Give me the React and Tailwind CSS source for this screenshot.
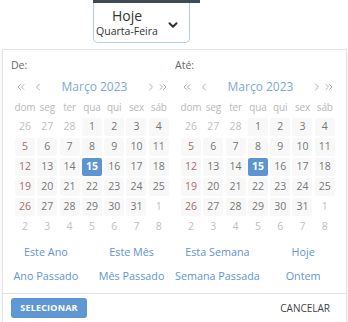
import { ChevronDown, ChevronLeft, ChevronRight, ChevronsLeft, ChevronsRight } from 'lucide-react'

const weekDays = ['dom', 'seg', 'ter', 'qua', 'qui', 'sex', 'sáb']

// March 2023 grid, starting on Sunday 26 Feb
const buildDays = () => {
  const days = []
  ;[26, 27, 28].forEach((d) => days.push({ d, out: true }))
  for (let d = 1; d <= 31; d++) days.push({ d, out: false })
  for (let d = 1; d <= 8; d++) days.push({ d, out: true })
  return days
}

const Calendar = ({ label, labelPad }) => {
  const days = buildDays()
  return (
    <div className="w-[166px]">
      <div className={`${labelPad} h-[16px] leading-[16px] text-[10.5px] text-[#666]`}>{label}</div>
      <div className="ml-[12px] w-[154px] mt-[4px] h-[20px] flex items-center justify-between text-[#9a9a9a]">
        <div className="flex items-center gap-[5px]">
          <ChevronsLeft size={12} strokeWidth={1.6} />
          <ChevronLeft size={12} strokeWidth={1.6} />
        </div>
        <span className="text-[12px] text-[#7ea7d8]">Março 2023</span>
        <div className="flex items-center gap-[0px]">
          <ChevronRight size={12} strokeWidth={1.6} />
          <ChevronsRight size={12} strokeWidth={1.6} />
        </div>
      </div>
      <div className="ml-[12px] mt-[1px] grid grid-cols-[repeat(7,20px)] gap-x-[2.3px] gap-y-[2px]">
        {weekDays.map((w) => (
          <div key={w} className="h-[18px] flex items-center justify-center text-[10px] text-[#b8b8b8] tracking-[-0.2px]">
            {w}
          </div>
        ))}
        {days.map((day, i) => {
          const selected = !day.out && day.d === 15
          const sunday = i % 7 === 0
          let cls = 'bg-[#f8f8f8] text-[#767676]'
          if (day.out) cls = 'text-[#c0c0c0]'
          else if (selected) cls = 'bg-[#5d95d1] text-white font-bold'
          else if (sunday) cls = 'bg-[#f8f8f8] text-[#a07070]'
          return (
            <div key={i} className={`h-[18px] flex items-center justify-center text-[10.5px] rounded-[2px] ${cls}`}>
              {day.d}
            </div>
          )
        })}
      </div>
    </div>
  )
}

const ranges = ['Este Ano', 'Este Mês', 'Esta Semana', 'Hoje', 'Ano Passado', 'Mês Passado', 'Semana Passada', 'Ontem']

export default function App() {
  return (
    <div className="w-[348px] h-[322px] bg-white overflow-hidden font-['Open_Sans',sans-serif]">
      {/* Trigger */}
      <div className="ml-[93px] w-[107px] h-[3px] bg-[#3f4a57]" />
      <div className="ml-[93px] w-[97px] h-[40px] border border-t-0 border-[#b5cdea] rounded-b-[5px] flex items-center">
        <div className="ml-[2px] w-[62px] flex flex-col items-center">
          <span className="text-[14px] leading-[16px] text-[#333]">Hoje</span>
          <span className="text-[10.5px] leading-[12px] mt-[1px] text-[#333]">Quarta-Feira</span>
        </div>
        <ChevronDown className="ml-[8px] mt-[4px] text-[#333]" size={14} strokeWidth={3.5} />
      </div>

      {/* Popup */}
      <div className="mt-[6px] ml-[2px] w-[345px] border border-[#e3e3e3] shadow-[0_2px_4px_rgba(0,0,0,0.06)] pt-[7px]">
        <div className="flex">
          <Calendar label="De:" labelPad="pl-[8px]" />
          <Calendar label="Até:" labelPad="pl-[6px]" />
        </div>

        <div className="mt-[4px] grid grid-cols-4 text-[10.8px] text-[#6194d3]">
          {ranges.map((r) => (
            <div key={r} className="h-[24px] flex items-center justify-center whitespace-nowrap">
              {r}
            </div>
          ))}
        </div>

        <div className="mt-[5px] border-t border-[#e2e2e2] h-[40px] flex items-start justify-between pl-[8px] pr-[16px]">
          <button className="mt-[4px] w-[76px] h-[20px] rounded-[3px] bg-[#5f97d5] text-white text-[9px] font-bold tracking-[0.2px]">
            SELECIONAR
          </button>
          <span className="mt-[7px] text-[10px] text-[#444]">CANCELAR</span>
        </div>
      </div>
    </div>
  )
}
